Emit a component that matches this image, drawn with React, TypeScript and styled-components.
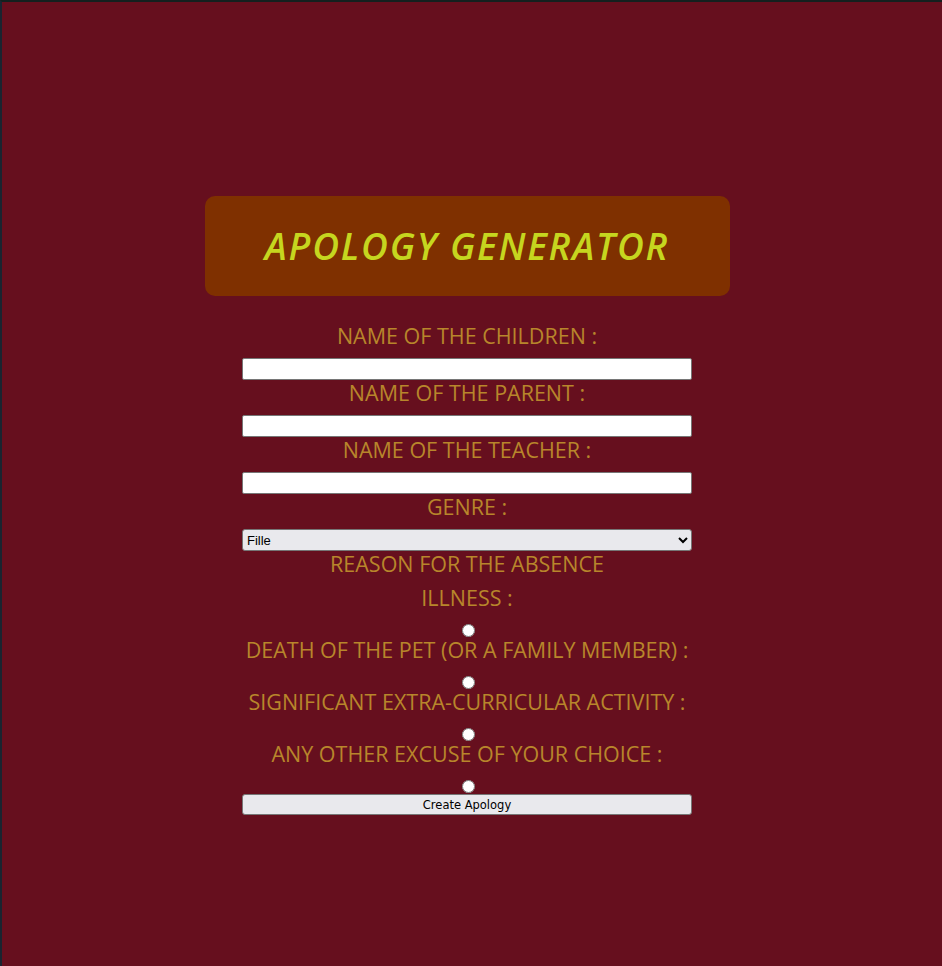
import styled, { createGlobalStyle } from "styled-components";

const GlobalStyle = createGlobalStyle`
  html, body {
    margin: 0;
    padding: 0;
    background: #660f1e;
  }
  body {
    font-family: "Open Sans", "Liberation Sans", sans-serif;
  }
`;

const reasons = [
  "ILLNESS :",
  "DEATH OF THE PET (OR A FAMILY MEMBER) :",
  "SIGNIFICANT EXTRA-CURRICULAR ACTIVITY :",
  "ANY OTHER EXCUSE OF YOUR CHOICE :",
];

const App = () => {
  return (
    <>
      <GlobalStyle />
      <Page>
        <Header>
          <Title>APOLOGY GENERATOR</Title>
        </Header>
        <Form onSubmit={(e) => e.preventDefault()}>
          <Label>NAME OF THE CHILDREN :</Label>
          <TextInput type="text" />
          <Label>NAME OF THE PARENT :</Label>
          <TextInput type="text" />
          <Label>NAME OF THE TEACHER :</Label>
          <TextInput type="text" />
          <Label>GENRE :</Label>
          <Select defaultValue="fille">
            <option value="fille">Fille</option>
            <option value="garcon">Garçon</option>
          </Select>
          <Label>REASON FOR THE ABSENCE</Label>
          {reasons.map((r) => (
            <Reason key={r}>
              <Label>{r}</Label>
              <Radio type="radio" name="reason" />
            </Reason>
          ))}
          <Button type="submit">Create Apology</Button>
        </Form>
      </Page>
    </>
  );
};

export default App;

const Page = styled.div`
  box-sizing: border-box;
  min-height: 966px;
  border-top: 2px solid #14201f;
  border-left: 2px solid #1a2430;
  padding: 194px 10px 0 0;
  display: flex;
  flex-direction: column;
  align-items: center;
`;

const Header = styled.div`
  box-sizing: border-box;
  width: 525px;
  height: 100px;
  background: #7f3000;
  border-radius: 10px;
  display: flex;
  align-items: center;
  justify-content: center;
`;

const Title = styled.h1`
  margin: 0 0 2px;
  color: #c6d61f;
  font-family: "Open Sans", "Liberation Sans", sans-serif;
  font-style: italic;
  font-weight: 600;
  font-size: 37px;
  letter-spacing: 1.8px;
`;

const Form = styled.form`
  width: 450px;
  margin-top: 28px;
  display: flex;
  flex-direction: column;
  align-items: stretch;
`;

const Reason = styled.div`
  display: flex;
  flex-direction: column;
`;

const Label = styled.label`
  display: block;
  text-align: center;
  color: #b8862b;
  font-size: 21.5px;
  line-height: 24px;
  height: 24px;
  margin-bottom: 10px;
  white-space: nowrap;
`;

const TextInput = styled.input`
  box-sizing: border-box;
  width: 100%;
  height: 22px;
  margin: 0 0 1px;
  border: 1px solid #767676;
  border-radius: 2px;
  background: #ffffff;
`;

const Select = styled.select`
  box-sizing: border-box;
  width: 100%;
  height: 22px;
  margin: 0 0 1px;
  border: 1px solid #767676;
  border-radius: 3px;
  background: #e9e9ed;
  color: #000;
  font-family: "Liberation Sans", Arial, sans-serif;
  font-size: 13px;
`;

const Radio = styled.input`
  display: block;
  width: 13px;
  height: 13px;
  margin: 4px auto 1px;
  align-self: center;
  position: relative;
  left: 1px;
`;

const Button = styled.button`
  box-sizing: border-box;
  width: 100%;
  height: 21px;
  padding: 0;
  border: 1px solid #767676;
  border-radius: 3px;
  background: #e9e9ed;
  color: #000;
  font-family: "DejaVu Sans", "Liberation Sans", sans-serif;
  font-size: 11.5px;
`;
